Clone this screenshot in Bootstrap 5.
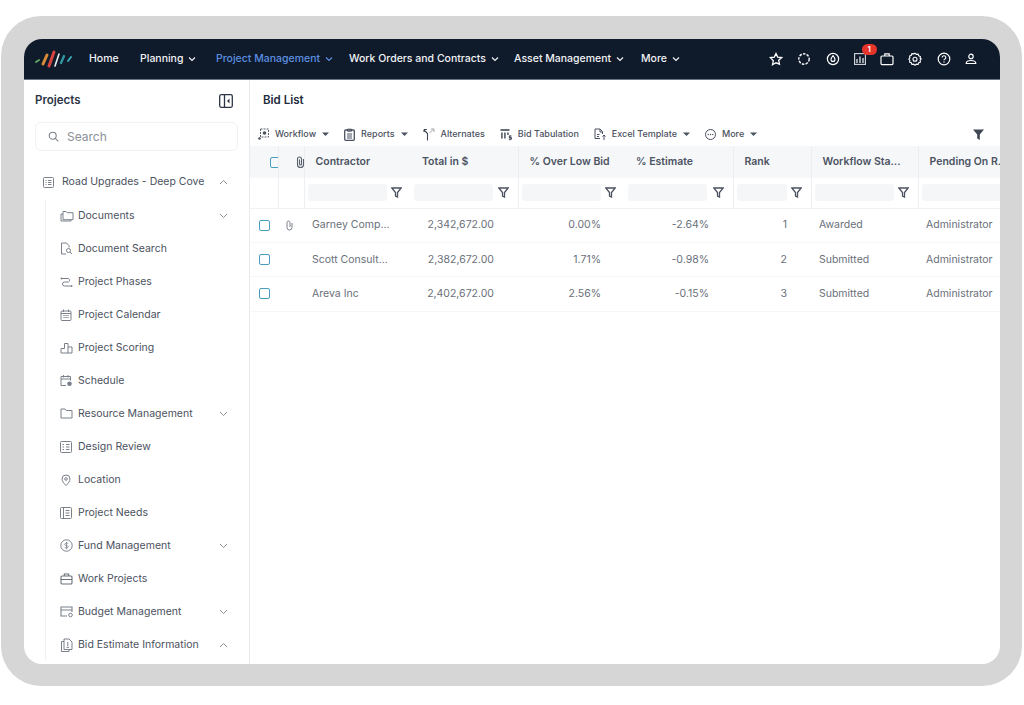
<!DOCTYPE html>
<html lang="en"><head><meta charset="utf-8"><title>Bid List</title>
<link href="https://cdn.jsdelivr.net/npm/bootstrap@5.3.0/dist/css/bootstrap.min.css" rel="stylesheet">
<style>
html,body{height:705px;overflow:hidden;background:#fff}
body{font-family:Inter,"Noto Sans",sans-serif;color:#3f4654;padding:16px 2px 19px 1px}
.frame-shell{height:670px;width:1021px;background:#d6d6d6;border-radius:40px;padding:23px 22px 22px 23px}
.screen{height:625px;width:976px;background:#fff;border-radius:18px;overflow:hidden;display:flex;flex-direction:column}
.topbar{height:41px;flex:none;background:#0f1a2b;border-bottom:1px solid #6b7280;color:#fff;padding:0 11px}
.logo-wrap{width:54px}
.menu-item{font-size:10.5px;font-weight:500;color:#f1f3f6;white-space:nowrap;line-height:1}
.menu-item svg{margin-left:5px}
.menu-item.on{color:#5b8fe0}
.m1{width:51px}.m2{width:76px}.m3{width:133px}.m4{width:165px}.m5{width:127px}
.tool-icons{margin-left:auto;width:220px;justify-content:space-between;padding-right:12px}
.tool-icons svg{display:block}
.alert-dot{position:absolute;top:-9px;left:8px;width:15px;height:11px;border-radius:6px;background:#e5352b;color:#fff;font-size:7px;font-weight:700;line-height:11px;text-align:center}
.side{width:226px;flex:none;border-right:1px solid #e9ebef;padding:0 11px;overflow:hidden}
.side-title{font-size:11.5px;font-weight:600;color:#2c3545;height:42px;padding-right:5px}
.search-box{height:29px;border:1px solid #f1f2f4;border-radius:6px;padding-left:12px;color:#8b9099;font-size:12px;gap:8px;width:203px}
.tree{margin-top:14px;font-size:10.5px;color:#4b5160}
.tree-row{height:33px;white-space:nowrap}
.tree-root{padding-left:8px;padding-right:10px;height:34px}
.tree-sub{margin-left:10px;border-left:1px solid #f1f2f4;padding-left:14px;padding-right:10px}
.tree-sub .tree-row{padding-right:0}
.tree-ico{width:17px;margin-right:1px;flex:none;display:flex}
.tree-root .tree-ico{margin-right:1px}
.tree-chev{margin-left:auto}
.main-pane{flex:1;min-width:0;overflow:hidden;display:flex;flex-direction:column}
.bid-title{font-size:11.5px;font-weight:600;color:#222c3c;height:42px;padding-left:13px}
.toolbar{height:24px;padding:0 16px 0 8px;font-size:9px;font-weight:500;color:#4b5160;margin-top:0}
.tool{gap:6px;white-space:nowrap;margin-right:15px}
.bid-table{table-layout:fixed;width:780px;margin:0;border-collapse:collapse;font-size:10.5px}
.bid-table th,.bid-table td{padding:0;vertical-align:middle;border:0;color:inherit;background:transparent;box-shadow:none}
.head-row th{height:32px;background:#f5f7f9;font-weight:600;color:#4c5361;padding-left:11px;white-space:nowrap}
.head-row th.rb,.filter-row td.rb{border-right:1px solid #eceef1}
.filter-row td{height:30px;border-bottom:1px solid #f0f1f3}
.filter-cell{display:flex;align-items:center;justify-content:space-between;padding:0 9px 0 3px}
.filter-box{height:17px;background:#f4f6f8;border-radius:3px;flex:1;margin-right:4px;max-width:79px}
.data-row td{height:34.4px;color:#6a707b;border-bottom:1px solid #f6f7f8;white-space:nowrap}
.cb{display:block;width:11px;height:11px;border:1.5px solid #4b9dc0;border-radius:2px;margin-left:9px}
.txt-l{padding-left:8px!important}
.txt-r{text-align:right;padding-right:24px!important}
.txt-r2{text-align:right;padding-right:25px!important}
</style></head>
<body>
<div class="frame-shell"><div class="screen">
<nav class="topbar d-flex align-items-center">
  <div class="logo-wrap d-flex align-items-center">
    <svg width="38" height="20" viewBox="0 0 38 20"><g fill="none" stroke-linecap="round"><path d="M1 13 L4 11" stroke="#5fa564" stroke-width="2"/><path d="M8 15 L12 6" stroke="#d98a38" stroke-width="3"/><path d="M14 17 L19 3" stroke="#d8433f" stroke-width="3"/><path d="M20 17 L24 5" stroke="#e8eef2" stroke-width="1.6"/><path d="M26 14 L29 7" stroke="#2f95a0" stroke-width="2.4"/><path d="M33 12 L36 8" stroke="#39a9b3" stroke-width="2"/></g></svg>
  </div>
  <span class="menu-item m1">Home</span>
  <span class="menu-item m2">Planning<svg width="8" height="6" viewBox="0 0 8 6"><path d="M1 1.5l3 3 3-3" fill="none" stroke="currentColor" stroke-width="1.2"/></svg></span>
  <span class="menu-item m3 on">Project Management<svg width="8" height="6" viewBox="0 0 8 6"><path d="M1 1.5l3 3 3-3" fill="none" stroke="currentColor" stroke-width="1.2"/></svg></span>
  <span class="menu-item m4">Work Orders and Contracts<svg width="8" height="6" viewBox="0 0 8 6"><path d="M1 1.5l3 3 3-3" fill="none" stroke="currentColor" stroke-width="1.2"/></svg></span>
  <span class="menu-item m5">Asset Management<svg width="8" height="6" viewBox="0 0 8 6"><path d="M1 1.5l3 3 3-3" fill="none" stroke="currentColor" stroke-width="1.2"/></svg></span>
  <span class="menu-item">More<svg width="8" height="6" viewBox="0 0 8 6"><path d="M1 1.5l3 3 3-3" fill="none" stroke="currentColor" stroke-width="1.2"/></svg></span>
  <div class="tool-icons d-flex align-items-center">
    <svg width="14" height="14" viewBox="0 0 14 14"><path d="M7 1.5l1.7 3.6 3.9.5-2.9 2.7.8 3.9L7 10.8l-3.5 1.9.8-3.9L1.4 5.6l3.9-.5z" fill="none" stroke="#fff" stroke-width="1.3"/></svg>
    <svg width="14" height="14" viewBox="0 0 14 14"><circle cx="7" cy="7" r="5.2" fill="none" stroke="#e8eaee" stroke-width="1.5" stroke-dasharray="2.6 1.2"/></svg>
    <svg width="14" height="14" viewBox="0 0 14 14"><circle cx="7" cy="7" r="5.6" fill="none" stroke="#fff" stroke-width="1.2"/><path d="M7 3.6c1.3 1.6 2 2.6 2 3.8a2 2 0 0 1-4 0c0-1.2.7-2.2 2-3.8z" fill="none" stroke="#fff" stroke-width="1.1"/></svg>
    <span class="position-relative d-block"><svg width="12" height="12" viewBox="0 0 12 12"><rect x=".6" y=".6" width="10.8" height="10.8" fill="none" stroke="#d5d8dd" stroke-width="1.1"/><path d="M3 10V6M6 10V3.5M9 10V5" stroke="#d5d8dd" stroke-width="1.4"/></svg><span class="alert-dot">1</span></span>
    <svg width="14" height="14" viewBox="0 0 14 14"><rect x="1" y="4" width="12" height="8.6" rx="1" fill="none" stroke="#fff" stroke-width="1.2"/><path d="M4.8 4V1.8h4.4V4" fill="none" stroke="#fff" stroke-width="1.2"/></svg>
    <svg width="14" height="14" viewBox="0 0 14 14"><path d="M7 1.2l1.3 1.2 1.8-.3.6 1.7 1.7.7-.3 1.8L13.2 7l-1.1 1.4.3 1.8-1.7.6-.6 1.7-1.8-.3L7 13.3l-1.3-1.1-1.8.3-.6-1.7-1.7-.6.3-1.8L.8 7l1.1-1.2-.3-1.8 1.7-.7.6-1.7 1.8.3z" fill="none" stroke="#fff" stroke-width="1.1"/><circle cx="7" cy="7.2" r="2" fill="none" stroke="#fff" stroke-width="1.1"/></svg>
    <svg width="14" height="14" viewBox="0 0 14 14"><circle cx="7" cy="7" r="5.8" fill="none" stroke="#fff" stroke-width="1.2"/><path d="M5.2 5.5A1.8 1.8 0 1 1 7.6 7.2c-.5.2-.6.6-.6 1.1" fill="none" stroke="#fff" stroke-width="1.1"/><circle cx="7" cy="10" r=".7" fill="#fff"/></svg>
    <svg width="12" height="12" viewBox="0 0 12 12"><circle cx="6" cy="3.4" r="2.2" fill="none" stroke="#fff" stroke-width="1.2"/><path d="M1.2 10.5c0-2 1.6-3 4.8-3s4.800 1 4.800 3z" fill="none" stroke="#fff" stroke-width="1.2"/></svg>
  </div>
</nav>
<div class="d-flex flex-grow-1" style="min-height:0">
<aside class="side">
  <div class="side-title d-flex align-items-center justify-content-between">Projects
    <svg width="14" height="14" viewBox="0 0 14 14"><rect x=".7" y=".7" width="12.600" height="12.600" rx="1.5" fill="none" stroke="#2c3545" stroke-width="1.3"/><path d="M5.500 1v12" stroke="#2c3545" stroke-width="1.300"/><path d="M10.500 4.500L8 7l2.500 2.500z" fill="#2c3545"/></svg>
  </div>
  <div class="search-box d-flex align-items-center">
    <svg width="11" height="11" viewBox="0 0 11 11"><circle cx="4.700" cy="4.700" r="3.500" fill="none" stroke="#7b808a" stroke-width="1.100"/><path d="M7.300 7.300l3 3" stroke="#7b808a" stroke-width="1.100"/></svg><span>Search</span>
  </div>
  <div class="tree">
    <div class="tree-row tree-root d-flex align-items-center">
      <span class="tree-ico" style="width:18px"><svg width="11" height="11" viewBox="0 0 11 11"><rect x=".5" y=".5" width="10" height="10" rx="1" fill="none" stroke="#7b808a"/><path d="M2.500 3.500h1M5 3.500h3.500M2.500 5.500h1M5 5.500h3.500M2.500 7.500h1M5 7.500h3.500" stroke="#7b808a"/></svg></span>Road Upgrades - Deep Cove
      <svg class="tree-chev" width="9" height="6" viewBox="0 0 9 6"><path d="M1 5l3.500-3.500L8 5" fill="none" stroke="#8a8f99"/></svg>
    </div>
    <div class="tree-sub">
      <div class="tree-row d-flex align-items-center"><span class="tree-ico"><svg width="14" height="12" viewBox="0 0 14 12"><path d="M3 2.500V1.500h3l1 1.200h6v7H3z" fill="none" stroke="#7b808a"/><path d="M3 4H1v7h10v-1.300" fill="none" stroke="#7b808a"/></svg></span>Documents<svg class="tree-chev" width="9" height="6" viewBox="0 0 9 6"><path d="M1 1l3.500 3.500L8 1" fill="none" stroke="#8a8f99"/></svg></div>
      <div class="tree-row d-flex align-items-center"><span class="tree-ico"><svg width="13" height="13" viewBox="0 0 13 13"><path d="M6 12H1.500V1h5l2.500 2.500v2" fill="none" stroke="#7b808a"/><circle cx="8.500" cy="8.500" r="2" fill="none" stroke="#7b808a"/><path d="M10 10l2 2" stroke="#7b808a"/></svg></span>Document Search</div>
      <div class="tree-row d-flex align-items-center"><span class="tree-ico"><svg width="13" height="12" viewBox="0 0 13 12"><path d="M2 2.500h6.500a2 2 0 0 1 0 3.500h-4a2 2 0 0 0 0 4h6" fill="none" stroke="#7b808a"/><circle cx="1.500" cy="2.500" r="1" fill="#7b808a"/><circle cx="11.500" cy="10" r="1" fill="#7b808a"/></svg></span>Project Phases</div>
      <div class="tree-row d-flex align-items-center"><span class="tree-ico"><svg width="12" height="12" viewBox="0 0 12 12"><rect x="1" y="2" width="10" height="9.500" rx="1" fill="none" stroke="#7b808a"/><path d="M1 4.500h10M3.500 .5v2.500M8.500 .5v2.500" stroke="#7b808a"/><path d="M3 6.500h6M3 8.500h6" stroke="#a9adb4"/></svg></span>Project Calendar</div>
      <div class="tree-row d-flex align-items-center"><span class="tree-ico"><svg width="13" height="12" viewBox="0 0 13 12"><path d="M1 11V6.500h3.500V1.500H8V11M8 5h4v6H1" fill="none" stroke="#7b808a"/></svg></span>Project Scoring</div>
      <div class="tree-row d-flex align-items-center"><span class="tree-ico"><svg width="13" height="13" viewBox="0 0 13 13"><path d="M6 11.500H1V2.500h9.500v4M1 5h9.500M3.500 1v2.500M8 1v2.500" fill="none" stroke="#7b808a"/><circle cx="9.500" cy="9.700" r="2.300" fill="#7b808a"/></svg></span>Schedule</div>
      <div class="tree-row d-flex align-items-center"><span class="tree-ico"><svg width="13" height="11" viewBox="0 0 13 11"><path d="M1 10V1h4l1.200 1.500H12V10z" fill="none" stroke="#7b808a"/></svg></span>Resource Management<svg class="tree-chev" width="9" height="6" viewBox="0 0 9 6"><path d="M1 1l3.500 3.500L8 1" fill="none" stroke="#8a8f99"/></svg></div>
      <div class="tree-row d-flex align-items-center"><span class="tree-ico"><svg width="12" height="12" viewBox="0 0 12 12"><rect x=".5" y=".5" width="11" height="11" rx="1" fill="none" stroke="#7b808a"/><path d="M2.500 3.500h1.500M6 3.500h3.500M2.500 6h1.500M6 6h3.500M2.500 8.500h1.500M6 8.500h3.500" stroke="#7b808a"/></svg></span>Design Review</div>
      <div class="tree-row d-flex align-items-center"><span class="tree-ico"><svg width="12" height="12" viewBox="0 0 12 12"><path d="M6 11.500C3.500 9 2 7 2 5a4 4 0 0 1 8 0c0 2-1.500 4-4 6.500z" fill="none" stroke="#7b808a"/><circle cx="6" cy="5" r="1.300" fill="none" stroke="#7b808a"/></svg></span>Location</div>
      <div class="tree-row d-flex align-items-center"><span class="tree-ico"><svg width="12" height="12" viewBox="0 0 12 12"><rect x=".5" y=".5" width="11" height="11" rx="1" fill="none" stroke="#7b808a"/><path d="M3.500 1v10M5.500 3.500h4M5.500 6h4M5.500 8.500h4" stroke="#7b808a"/></svg></span>Project Needs</div>
      <div class="tree-row d-flex align-items-center"><span class="tree-ico"><svg width="13" height="13" viewBox="0 0 13 13"><circle cx="6.500" cy="6.500" r="5.700" fill="none" stroke="#7b808a"/><path d="M8.300 4.700c-.5-.8-3.600-1-3.600.7 0 1.700 3.600.6 3.600 2.300 0 1.700-3.200 1.500-3.700.6M6.500 2.800v7.400" fill="none" stroke="#7b808a" stroke-width=".8"/></svg></span>Fund Management<svg class="tree-chev" width="9" height="6" viewBox="0 0 9 6"><path d="M1 1l3.500 3.500L8 1" fill="none" stroke="#8a8f99"/></svg></div>
      <div class="tree-row d-flex align-items-center"><span class="tree-ico"><svg width="13" height="12" viewBox="0 0 13 12"><rect x="1" y="3" width="11" height="8" rx="1" fill="none" stroke="#6b7079" stroke-width="1.100"/><path d="M4.300 3V1h4.400v2M1 6.500h11" fill="none" stroke="#6b7079" stroke-width="1.100"/></svg></span>Work Projects</div>
      <div class="tree-row d-flex align-items-center"><span class="tree-ico"><svg width="14" height="12" viewBox="0 0 14 12"><path d="M7 10H1V1h11v5M1 4h11" fill="none" stroke="#7b808a" stroke-width="1.100"/><circle cx="10.500" cy="9" r="1.800" fill="none" stroke="#7b808a"/></svg></span>Budget Management<svg class="tree-chev" width="9" height="6" viewBox="0 0 9 6"><path d="M1 1l3.500 3.500L8 1" fill="none" stroke="#8a8f99"/></svg></div>
      <div class="tree-row d-flex align-items-center"><span class="tree-ico"><svg width="13" height="14" viewBox="0 0 13 14"><path d="M4 1h5l3 3v7.500H4z" fill="none" stroke="#7b808a"/><path d="M4 3.500H1.500V13.500H9v-2" fill="none" stroke="#7b808a"/><path d="M7.800 4v4M6.500 9.300h2.600" stroke="#7b808a"/></svg></span>Bid Estimate Information<svg class="tree-chev" width="9" height="6" viewBox="0 0 9 6"><path d="M1 5l3.500-3.500L8 5" fill="none" stroke="#8a8f99"/></svg></div>
    </div>
  </div>
</aside>
<main class="main-pane">
  <div class="bid-title d-flex align-items-center">Bid List</div>
  <div class="toolbar d-flex align-items-center">
    <span class="tool d-flex align-items-center"><svg width="11" height="12" viewBox="0 0 11 12"><rect x="2.500" y="1" width="8" height="8" fill="none" stroke="#5b616c" stroke-dasharray="2 1"/><circle cx="6.500" cy="5" r="1.800" fill="#4b5160"/><circle cx="1.500" cy="10.500" r="1.300" fill="#4b5160"/></svg>Workflow<svg width="7" height="4" viewBox="0 0 7 4"><path d="M0 .5h7L3.500 4z" fill="#4b5160"/></svg></span>
    <span class="tool d-flex align-items-center"><svg width="11" height="13" viewBox="0 0 11 13"><rect x=".7" y="2" width="9.600" height="10.300" rx="1" fill="none" stroke="#4b5160" stroke-width="1.300"/><path d="M3.500 1.200h4v2h-4zM3 6h5M3 8h5M3 10h5" fill="none" stroke="#4b5160"/></svg>Reports<svg width="7" height="4" viewBox="0 0 7 4"><path d="M0 .5h7L3.500 4z" fill="#4b5160"/></svg></span>
    <span class="tool d-flex align-items-center"><svg width="12" height="13" viewBox="0 0 12 13"><path d="M4.500 12.500V5.500L1 2M1 1.500v2.500M1 1.500h2.800" fill="none" stroke="#3f4654" stroke-width="1.100"/><path d="M6.500 5l3.500-3.500M8 1h3v3" fill="none" stroke="#8a8f99" stroke-width=".8"/></svg>Alternates</span>
    <span class="tool d-flex align-items-center"><svg width="12" height="13" viewBox="0 0 12 13"><path d="M.5 1h9v2H.5zM1 4.500h1.800v6H1zM4 4.500h1.800v6H4zM7 4.500h1.800v2.500H7z" fill="#666c76"/><path d="M10 7v5.500" stroke="#333b48" stroke-width=".7"/><path d="M11.500 8H9.300v1.600h2.200v1.600H8.800" fill="none" stroke="#333b48" stroke-width=".9"/></svg>Bid Tabulation</span>
    <span class="tool d-flex align-items-center"><svg width="12" height="13" viewBox="0 0 12 13"><path d="M6 10.500H1V1h5l2.500 2.500V6M6 1v3h2.500" fill="none" stroke="#4b5160"/><path d="M10 12V7M8.500 8.500L10 7l1.500 1.500" fill="none" stroke="#4b5160"/><path d="M3 6.500h2.500M3 8.500h2" stroke="#4b5160"/></svg>Excel Template<svg width="7" height="4" viewBox="0 0 7 4"><path d="M0 .5h7L3.500 4z" fill="#4b5160"/></svg></span>
    <span class="tool d-flex align-items-center"><svg width="11" height="11" viewBox="0 0 11 11"><circle cx="5.500" cy="5.500" r="5" fill="none" stroke="#4b5160"/><circle cx="3.200" cy="5.500" r=".7" fill="#4b5160"/><circle cx="5.500" cy="5.500" r=".7" fill="#4b5160"/><circle cx="7.800" cy="5.500" r=".7" fill="#4b5160"/></svg>More<svg width="7" height="4" viewBox="0 0 7 4"><path d="M0 .5h7L3.500 4z" fill="#4b5160"/></svg></span>
    <svg class="ms-auto" width="11" height="11" viewBox="0 0 11 11"><path d="M0 .5h11L6.800 5.500V11L4.200 9.500V5.500z" fill="#3f4654"/></svg>
  </div>
  <table class="table bid-table">
    <colgroup><col style="width:28px"><col style="width:26px"><col style="width:107px"><col style="width:107px"><col style="width:107px"><col style="width:108px"><col style="width:78px"><col style="width:107px"><col style="width:112px"></colgroup>
    <thead>
      <tr class="head-row"><th class="rb"><span class="cb"></span></th><th class="rb"><svg class="d-block" style="margin-left:6px" width="9" height="12" viewBox="0 0 9 12"><path d="M7.500 3v5.500a3 3 0 0 1-6 0V3a2 2 0 0 1 4 0v5a1 1 0 0 1-2 0V3.500" fill="none" stroke="#5b616c" stroke-width="1.100"/></svg></th><th>Contractor</th><th class="rb">Total in $</th><th>% Over Low Bid</th><th class="rb">% Estimate</th><th class="rb">Rank</th><th class="rb">Workflow Sta...</th><th>Pending On R...</th></tr>
      <tr class="filter-row"><td class="rb"></td><td class="rb"></td>
      <td><div class="filter-cell"><span class="filter-box"></span><svg width="11" height="11" viewBox="0 0 11 11"><path d="M.8 1h9.400L6.500 5.500V10L4.500 9V5.500z" fill="none" stroke="#4b5160" stroke-width="1.300"/></svg></div></td>
      <td class="rb"><div class="filter-cell"><span class="filter-box"></span><svg width="11" height="11" viewBox="0 0 11 11"><path d="M.8 1h9.400L6.500 5.500V10L4.500 9V5.500z" fill="none" stroke="#4b5160" stroke-width="1.300"/></svg></div></td>
      <td><div class="filter-cell"><span class="filter-box"></span><svg width="11" height="11" viewBox="0 0 11 11"><path d="M.8 1h9.400L6.500 5.500V10L4.500 9V5.500z" fill="none" stroke="#4b5160" stroke-width="1.300"/></svg></div></td>
      <td class="rb"><div class="filter-cell"><span class="filter-box"></span><svg width="11" height="11" viewBox="0 0 11 11"><path d="M.8 1h9.400L6.500 5.500V10L4.500 9V5.500z" fill="none" stroke="#4b5160" stroke-width="1.300"/></svg></div></td>
      <td class="rb"><div class="filter-cell"><span class="filter-box"></span><svg width="11" height="11" viewBox="0 0 11 11"><path d="M.8 1h9.400L6.500 5.500V10L4.500 9V5.500z" fill="none" stroke="#4b5160" stroke-width="1.300"/></svg></div></td>
      <td class="rb"><div class="filter-cell"><span class="filter-box"></span><svg width="11" height="11" viewBox="0 0 11 11"><path d="M.8 1h9.400L6.500 5.500V10L4.500 9V5.500z" fill="none" stroke="#4b5160" stroke-width="1.300"/></svg></div></td>
      <td><div class="filter-cell"><span class="filter-box"></span></div></td></tr>
    </thead>
    <tbody>
      <tr class="data-row"><td><span class="cb"></span></td><td><svg class="d-block" style="margin-left:8px" width="7" height="11" viewBox="0 0 7 11"><path d="M6 3v4.500a2.500 2.500 0 0 1-5 0V2.500a1.500 1.500 0 0 1 3 0V7" fill="none" stroke="#7b808a"/></svg></td><td class="txt-l">Garney Comp...</td><td class="txt-r">2,342,672.00</td><td class="txt-r">0.00%</td><td class="txt-r">-2.64%</td><td class="txt-r">1</td><td class="txt-l">Awarded</td><td class="txt-l">Administrator</td></tr>
      <tr class="data-row"><td><span class="cb"></span></td><td></td><td class="txt-l">Scott Consult...</td><td class="txt-r">2,382,672.00</td><td class="txt-r">1.71%</td><td class="txt-r">-0.98%</td><td class="txt-r">2</td><td class="txt-l">Submitted</td><td class="txt-l">Administrator</td></tr>
      <tr class="data-row"><td><span class="cb"></span></td><td></td><td class="txt-l">Areva Inc</td><td class="txt-r">2,402,672.00</td><td class="txt-r">2.56%</td><td class="txt-r">-0.15%</td><td class="txt-r">3</td><td class="txt-l">Submitted</td><td class="txt-l">Administrator</td></tr>
    </tbody>
  </table>
</main>
</div>
</div></div>
<script src="https://cdn.jsdelivr.net/npm/bootstrap@5.3.0/dist/js/bootstrap.bundle.min.js"></script>
</body></html>
